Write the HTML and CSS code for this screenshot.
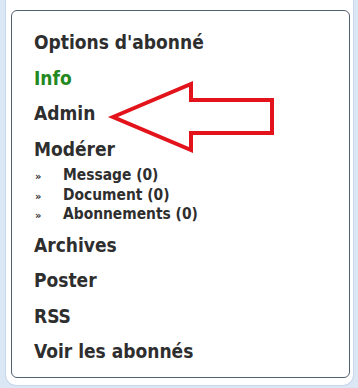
FILE: index.html
```html
<!DOCTYPE html>
<html lang="fr">
<head>
  <meta charset="UTF-8">
  <title>Options d'abonné</title>
  <link rel="stylesheet" href="styles.css">
</head>
<body>
<div class="panel">
  <div class="box">
    <ul class="menu">
      <li class="menu-title">Options d'abonné</li>
      <li class="active">Info</li>
      <li>Admin</li>
      <li>Modérer
        <ul class="sub">
          <li>Message (0)</li>
          <li>Document (0)</li>
          <li>Abonnements (0)</li>
        </ul>
      </li>
      <li>Archives</li>
      <li>Poster</li>
      <li>RSS</li>
      <li>Voir les abonnés</li>
    </ul>
  </div>

  <!-- flèche rouge -->
  <svg class="arrow" width="358" height="388" viewBox="0 0 358 388">
    <polygon points="113,117 191,84 191,100 272,100 272,133 191,133 191,150"
             fill="none" stroke="#e3131b" stroke-width="4" stroke-linejoin="miter"/>
  </svg>
</div>
</body>
</html>
```

FILE: styles.css
```css
* { box-sizing: border-box; }
body {
  margin: 0;
  background-color: #dbe7f5;
  font-family: 'DejaVu Sans Condensed', 'DejaVu Sans', sans-serif;
  font-weight: bold;
  color: #2e2e2e;
}
.panel {
  margin: 0 4px 0 5px;
  padding: 10px 3px 7px 5px;
  height: 386px;
  background-color: #fff;
  border: 1px solid #c6d7ea;
  border-top: none;
  border-radius: 0 0 11px 11px;
}
.box {
  border: 1px solid #52616f;
  border-radius: 6px;
  padding: 14px 10px 0 22px;
  height: 368px;
}
.menu, .sub {
  list-style: none;
  margin: 0;
  padding: 0;
}
.menu > li {
  font-size: 19px;
  line-height: 35.5px;
}
.menu > li.active { color: #23891f; }
.sub {
  margin: -1px 0 3px 0;
}
.sub li {
  display: flex;
  align-items: baseline;
  font-size: 15.4px;
  line-height: 19.5px;
}
.sub li::before {
  content: "»";
  width: 28px;
  padding-left: 1px;
  font-size: 11px;
  line-height: 10px;
}
.arrow {
  position: absolute;
  left: 0;
  top: 0;
}
```
